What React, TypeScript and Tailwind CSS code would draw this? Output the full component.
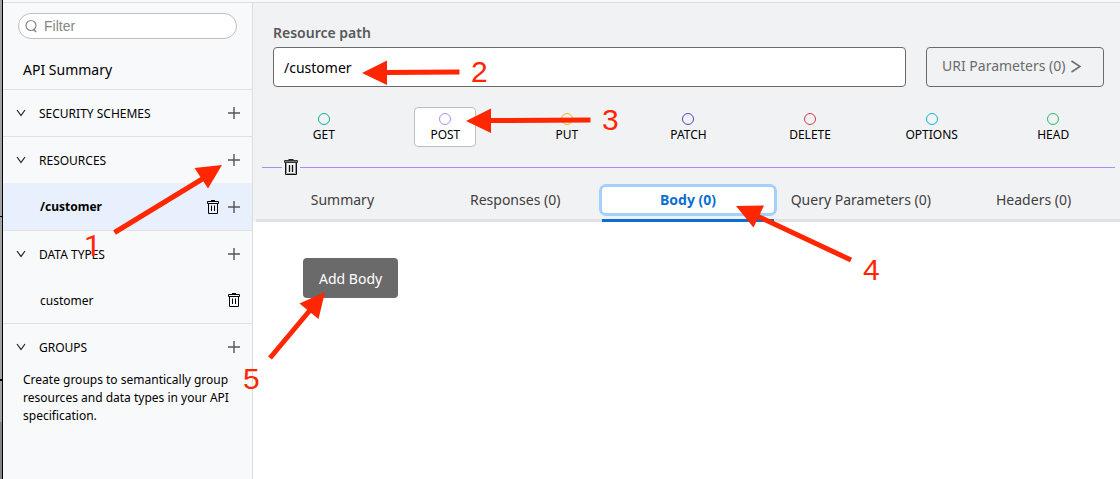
import React from "react";

interface IconProps {
  className?: string;
}

function PlusIcon({ className = "" }: IconProps) {
  return (
    <svg width="12" height="12" viewBox="0 0 12 12" className={className} aria-hidden="true">
      <path d="M6 0V12M0 6H12" stroke="#555" strokeWidth="1.4" fill="none" />
    </svg>
  );
}

function ChevronDownIcon() {
  return (
    <svg width="10" height="8" viewBox="0 0 10 8" aria-hidden="true">
      <path d="M1 1L5 6.5L9 1" stroke="#222" strokeWidth="1.2" fill="none" />
    </svg>
  );
}

function TrashIcon() {
  return (
    <svg width="12" height="14" viewBox="0 0 12 14" aria-hidden="true">
      <path d="M4 0.5H8M0.5 1.5H11.5V3.5H0.5ZM1.5 3.5V13.5H10.5V3.5M4.5 5.5V11M7.5 5.5V11" stroke="#000" fill="none" />
    </svg>
  );
}

function TrashSolidIcon() {
  return (
    <svg width="14" height="16" viewBox="0 0 14 16" aria-hidden="true">
      <path d="M4.5 0.5H9.5" stroke="#222" fill="none" />
      <path d="M0.5 1.5H13.5V3.5H0.5Z" fill="#777" stroke="#333" />
      <path d="M1.5 4V15.5H12.5V4" stroke="#111" fill="none" />
      <path d="M2.5 4V14.5H11.5V4" stroke="#999" fill="none" />
      <path d="M5.500 6V13M8.500 6V13" stroke="#111" strokeWidth="1.3" fill="none" />
    </svg>
  );
}

interface SectionHeaderProps {
  title: string;
}

function SectionHeader({ title }: SectionHeaderProps) {
  return (
    <div className="flex h-[46px] items-center pr-3 pl-[13px]">
      <button type="button" className="flex items-center gap-[13px] text-xs text-black">
        <ChevronDownIcon />
        <span className="pt-0.5">{title}</span>
      </button>
      <button type="button" aria-label={`Add to ${title}`} className="ml-auto">
        <PlusIcon />
      </button>
    </div>
  );
}

function Sidebar() {
  return (
    <aside className="w-[250px] shrink-0 border-r border-[#dcdddf] bg-[#f8f9fb]">
      <div className="px-[15px] pt-[10px]">
        <label className="flex h-[26px] items-center gap-[6px] rounded-full border border-[#bdbfc1] bg-white pl-[6px]">
          <svg width="13" height="14" viewBox="0 0 13 14" className="shrink-0" aria-hidden="true">
            <circle cx="6" cy="6.5" r="5" stroke="#888" strokeWidth="1.2" fill="none" />
            <path d="M8.500 10L11 13" stroke="#888" strokeWidth="1.6" fill="none" />
          </svg>
          <input
            type="text"
            aria-label="Filter"
            placeholder="Filter"
            className="w-full min-w-0 bg-transparent font-['Liberation_Sans',Arial,sans-serif] text-sm outline-none placeholder:text-[#858585]"
          />
        </label>
      </div>

      <div className="mt-[11px] flex h-10 items-center border-b border-[#e0e1e3] pl-5">
        <a href="#summary" className="text-sm text-black">API Summary</a>
      </div>

      <section className="border-b border-[#e0e1e3]">
        <SectionHeader title="SECURITY SCHEMES" />
      </section>

      <section className="border-b border-[#e0e1e3]">
        <SectionHeader title="RESOURCES" />
        <div className="flex h-[47px] items-center gap-[9px] bg-[#e8f0fe] pr-3 pl-[37px]">
          <a href="#customer" className="mr-auto text-xs font-bold text-black">/customer</a>
          <button type="button" aria-label="Delete /customer"><TrashIcon /></button>
          <button type="button" aria-label="Add to /customer"><PlusIcon /></button>
        </div>
      </section>

      <section className="border-b border-[#e0e1e3]">
        <SectionHeader title="DATA TYPES" />
        <div className="flex h-[46px] items-center pr-3 pl-[37px]">
          <a href="#customer-type" className="mr-auto pt-0.5 text-xs text-black">customer</a>
          <button type="button" aria-label="Delete customer"><TrashIcon /></button>
        </div>
      </section>

      <section>
        <SectionHeader title="GROUPS" />
        <p className="pt-px pr-4 pl-5 text-xs leading-[18px] text-black">
          Create groups to semantically group resources and data types in your API specification.
        </p>
      </section>
    </aside>
  );
}

const methods = [
  { name: "GET", ring: "border-[#12b09a]" },
  { name: "POST", ring: "border-[#ac8cf0]" },
  { name: "PUT", ring: "border-[#f0b323]" },
  { name: "PATCH", ring: "border-[#4f46c8]" },
  { name: "DELETE", ring: "border-[#d63a52]" },
  { name: "OPTIONS", ring: "border-[#15b3d6]" },
  { name: "HEAD", ring: "border-[#2bb866]" },
];

const tabs = ["Summary", "Responses (0)", "Body (0)", "Query Parameters (0)", "Headers (0)"];

function ResourceEditor() {
  return (
    <main className="min-w-0 flex-1 bg-white">
      <div className="bg-[#f1f2f4] pt-5">
        <div className="flex items-end gap-5 pr-4 pl-5">
          <div className="min-w-0 flex-1">
            <label htmlFor="resource-path" className="mb-1 block text-sm leading-5 font-semibold text-[#58595a]">
              Resource path
            </label>
            <input
              id="resource-path"
              type="text"
              defaultValue="/customer"
              className="block h-10 w-full rounded border border-[#6a6a6b] bg-white px-[10px] text-sm text-black outline-none"
            />
          </div>
          <button
            type="button"
            className="flex h-10 w-[178px] items-center gap-[6px] rounded border border-[#6a6a6b] pb-0.5 pl-[15px] text-sm text-[#6b6c6d]"
          >
            URI Parameters (0)
            <svg width="10" height="13" viewBox="0 0 10 13" aria-hidden="true">
              <path d="M0.5 1L9 6.5L0.5 12" stroke="#6b6c6d" strokeWidth="1.5" fill="none" />
            </svg>
          </button>
        </div>

        <div className="mt-5 grid grid-cols-7 justify-items-center pr-[6px] pl-[10px]">
          {methods.map((m) => (
            <button
              key={m.name}
              type="button"
              className={`flex h-10 min-w-[62px] flex-col items-center rounded-sm border pt-[5px] text-xs text-black ${
                m.name === "POST" ? "border-[#bdbec0] bg-white" : "border-transparent"
              }`}
            >
              <span className={`size-3 shrink-0 rounded-full border ${m.ring}`} />
              <span className="mt-0.5">{m.name}</span>
            </button>
          ))}
        </div>

        <div className="mt-3 flex items-center gap-[2px] pr-[5px] pl-[9px]">
          <span className="h-px w-5 bg-[#ac8cf0]" />
          <button type="button" aria-label="Delete method"><TrashSolidIcon /></button>
          <span className="h-px flex-1 bg-[#ac8cf0]" />
        </div>

        <div role="tablist" className="ml-[3px] grid grid-cols-5 pt-3">
          {tabs.map((tab) => {
            const active = tab === "Body (0)";
            return (
              <div key={tab} className={`border-b-3 pb-[6px] ${active ? "border-[#0b6fd0]" : "border-[#e0e0e0]"}`}>
                <button
                  type="button"
                  role="tab"
                  aria-selected={active}
                  className={`h-[26px] w-full text-sm whitespace-nowrap ${
                    active ? "rounded-sm bg-white font-bold text-[#0b6fd0] ring-3 ring-[#a5d0fb]" : "text-[#3f4041]"
                  }`}
                >
                  {tab}
                </button>
              </div>
            );
          })}
        </div>
      </div>

      <div className="px-[50px] py-9">
        <button type="button" className="h-10 rounded bg-[#6a6a6a] px-4 pt-0.5 text-sm text-white">
          Add Body
        </button>
      </div>
    </main>
  );
}

// Red callout arrows with step numbers, drawn above the page
const arrows = [
  { shaft: "M114.500 232.500L204 178", head: "M222 165L194.500 168L208 188.500Z" },
  { shaft: "M459.500 72L386 72.500", head: "M362 73L387 60.500V85Z" },
  { shaft: "M590.500 120L490 120.500", head: "M466 121L491 108.500V133Z" },
  { shaft: "M851 260L757 216", head: "M736 206L764 205.500L753.500 227.500Z" },
  { shaft: "M270 358L311 309", head: "M325 292L299.500 303.500L318.500 319Z" },
];

function Callouts() {
  return (
    <div className="pointer-events-none absolute inset-0 overflow-hidden font-['Liberation_Sans',Arial,sans-serif] text-[30px] leading-8 text-[#ff2600]">
      <svg width="1120" height="479" viewBox="0 0 1120 479" className="absolute top-0 left-0 max-w-none" aria-hidden="true">
        {arrows.map((a) => (
          <g key={a.shaft}>
            <path d={a.shaft} stroke="#ff2600" strokeWidth="5" fill="none" />
            <path d={a.head} fill="#ff2600" />
          </g>
        ))}
      </svg>
      <span className="absolute top-[230px] left-[84px] font-['Roboto',sans-serif]">1</span>
      <span className="absolute top-[56px] left-[471px]">2</span>
      <span className="absolute top-[104px] left-[602px]">3</span>
      <span className="absolute top-[254px] left-[863px]">4</span>
      <span className="absolute top-[363px] left-[243px]">5</span>
    </div>
  );
}

export default function App() {
  return (
    <div className="relative flex min-h-screen flex-col bg-[#f8f9fb] font-['Noto_Sans',sans-serif]">
      <div className="flex flex-1">
        {/* edge of the panel behind */}
        <div className="flex w-[3px] shrink-0 flex-col border-r border-black bg-[#a3a3a3]">
          <div className="h-[217px] border-b border-black" />
          <div className="h-[164px] border-b-2 border-black" />
          <div className="h-[41px]" />
          <div className="flex-1 bg-[#858585]" />
        </div>
        <div className="flex min-w-0 flex-1 flex-col">
          <div className="h-[3px] border-b border-[#dcdddf]" />
          <div className="flex flex-1">
            <Sidebar />
            <ResourceEditor />
          </div>
        </div>
      </div>
      <Callouts />
    </div>
  );
}
